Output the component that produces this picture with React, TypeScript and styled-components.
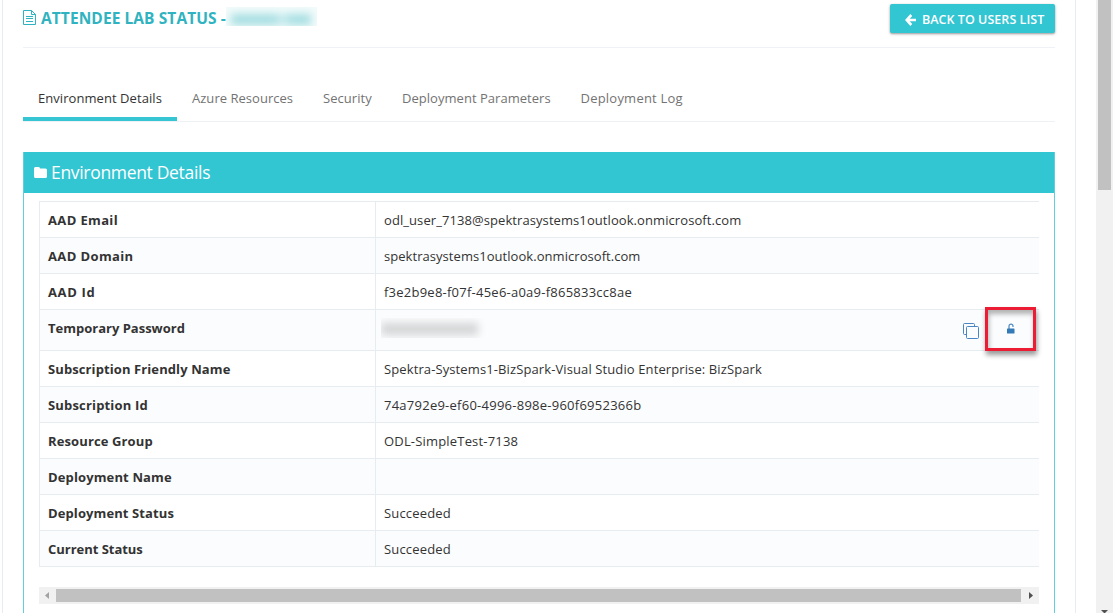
import React from "react";
import styled, { createGlobalStyle } from "styled-components";

const teal = "#32c5d2";

const GlobalStyle = createGlobalStyle`
  *, *::before, *::after { box-sizing: border-box; }
  body {
    margin: 0;
    height: 613px;
    overflow: hidden;
    background: #fff;
    color: #333;
    font-family: "Open Sans", "Noto Sans", sans-serif;
    font-size: 13px;
  }
`;

const Page = styled.div`
  display: flex;
  justify-content: space-between;
  width: 1113px;
  height: 613px;
  overflow: hidden;
`;

const Portlet = styled.main`
  margin-left: 2px;
  width: 1074px;
  height: 613px;
  padding: 0 20px;
  border: solid #e7ecf1;
  border-width: 0 1px;
`;

const TitleBar = styled.header`
  display: flex;
  justify-content: space-between;
  align-items: flex-start;
  height: 48px;
  padding-top: 4px;
  border-bottom: 1px solid #eef1f5;
`;

const Title = styled.h1`
  display: flex;
  align-items: center;
  margin: 0;
  height: 27px;
  color: #2fb3c0;
  font-size: 15.5px;
  font-weight: 700;
  white-space: pre;
  svg { margin-right: 5px; }
`;

const Track = styled.span<{ $ls?: number }>`
  letter-spacing: ${(p) => p.$ls ?? 0}px;
  white-space: pre;
`;

const RedactedName = styled.span`
  width: 91px;
  height: 19px;
  margin: -2px 0 0 -4px;
  overflow: hidden;
  padding: 7px 5px;
  background: #f3fbfb;
  &::before {
    content: "";
    display: block;
    width: 80px;
    height: 11px;
    background: linear-gradient(90deg, #a3dde1 0 55%, #cdeef0 64%, #a3dde1 74%);
    filter: blur(4px);
  }
`;

const BackButton = styled.button`
  display: flex;
  align-items: center;
  width: 165px;
  height: 29px;
  padding: 2px 0 0 15px;
  gap: 6px;
  border: 0;
  border-radius: 2px;
  background: ${teal};
  color: #fff;
  font: 600 12.5px "Open Sans", sans-serif;
  box-shadow: 0 1px 3px rgba(0, 0, 0, 0.25), 0 1px 2px rgba(0, 0, 0, 0.2);
`;

const Tabs = styled.nav`
  display: flex;
  height: 47px;
  margin-top: 27px;
  border-bottom: 1px solid #eef1f5;
`;

const Tab = styled.a<{ $w: number; $active?: boolean }>`
  width: ${(p) => p.$w}px;
  height: 46px;
  padding: 13px 0 0 15px;
  line-height: 20px;
  color: ${(p) => (p.$active ? "#333" : "#737373")};
  border-bottom: ${(p) => (p.$active ? `4px solid #36c6d3` : "0")};
`;

const Panel = styled.section`
  margin-top: 30px;
  height: 500px;
  border: 1px solid #5fcfdc;
  border-top: 0;
`;

const PanelHeader = styled.h2`
  display: flex;
  align-items: center;
  gap: 4px;
  margin: 0;
  height: 41px;
  padding-left: 10px;
  background: ${teal};
  color: #fff;
  font-size: 17.5px;
  font-weight: 400;
  span { margin-top: -2px; }
`;

const Details = styled.dl`
  margin: 8px 15px 0;
  border: solid #e7ecf1;
  border-width: 1px 0 0 1px;
`;

const Row = styled.div<{ $alt: boolean; $tall?: boolean }>`
  display: flex;
  height: ${(p) => (p.$tall ? 41 : 36)}px;
  border-bottom: 1px solid #e7ecf1;
  background: ${(p) => (p.$alt ? "#fbfcfd" : "#fff")};
  line-height: 20px;
`;

const Label = styled.dt`
  width: 336px;
  padding: 8px;
  border-right: 1px solid #e7ecf1;
  font-weight: 700;
`;

const Value = styled.dd`
  flex: 1;
  display: flex;
  justify-content: space-between;
  margin: 0;
  padding: 8px;
`;

const RedactedPassword = styled.span`
  width: 105px;
  height: 20px;
  margin: 0 0 0 -3px;
  padding: 5px 0;
  overflow: hidden;
  &::before {
    content: "";
    display: block;
    width: 97px;
    height: 12px;
    background: #d2d4d5;
    filter: blur(4px);
  }
`;

const Actions = styled.span`
  display: flex;
  align-items: flex-start;
  margin: -11px -5px 0 0;
  svg { display: block; }
`;

const CopyButton = styled.span`
  margin: 16px 6px 0 0;
`;

const UnlockFrame = styled.span`
  display: flex;
  align-items: center;
  justify-content: center;
  flex: none;
  width: 51px;
  height: 44px;
  padding-bottom: 1px;
  border: 3px solid #ed1c35;
  box-shadow: 1px 4px 5px rgba(0, 0, 0, 0.4), inset 1px 4px 5px rgba(0, 0, 0, 0.3);
`;

const HBar = styled.div`
  display: flex;
  align-items: center;
  justify-content: space-between;
  margin: 20px 15px 0;
  height: 17px;
  padding: 0 6px;
  background: #f1f1f1;
`;

const HThumb = styled.div`
  width: 965px;
  height: 13px;
  margin-right: 1px;
  background: #c1c1c1;
`;

const VBar = styled.aside`
  display: flex;
  flex-direction: column;
  align-items: center;
  justify-content: space-between;
  width: 17px;
  height: 613px;
  background: #f1f1f1;
`;

const VThumb = styled.div`
  width: 13px;
  height: 190px;
  background: #c1c1c1;
`;

const FileIcon = () => (
  <svg width="13" height="15" viewBox="0 0 13 15" fill="none" stroke="#2fb3c0">
    <path d="M.5.5h8l4 4v10H.5zM8.5.5v4h4M3 6.5h7M3 8.5h7M3 11.5h7" />
  </svg>
);

const ArrowIcon = () => (
  <svg width="11" height="12" viewBox="0 0 11 12" fill="none" stroke="#fff" strokeWidth="2.6">
    <path d="M6.3 1L1.7 6l4.6 5M2 6h9" />
  </svg>
);

const FolderIcon = () => (
  <svg width="13" height="11" viewBox="0 0 13 11" fill="#fff">
    <path d="M1.3 0h3.4Q6 0 6 1.5h5.5Q13 1.500 13 3v6.500Q13 11 11.500 11h-10Q0 11 0 9.500v-8Q0 0 1.300 0z" />
  </svg>
);

const CopyIcon = () => (
  <svg width="16" height="16" viewBox="0 0 16 16" fill="none" stroke="#4a86c2">
    <path d="M3.500 11.500H1.500Q.500 11.500.500 10.500V1.500Q.500.500 1.500.500h9Q11.500.500 11.500 1.500v2" />
    <rect x="3.500" y="3.500" width="12" height="12" rx="1" />
  </svg>
);

const UnlockIcon = () => (
  <svg width="8" height="11" viewBox="0 0 8 11">
    <path d="M2 6V3.200a2 2 0 0 1 4 0V4" fill="none" stroke="#4a86c2" strokeWidth="1.200" />
    <rect y="5.500" width="7.500" height="5" rx=".6" fill="#337ab7" />
  </svg>
);

const Caret = ({ d, color, w, h }: { d: string; color: string; w: number; h: number }) => (
  <svg width={w} height={h} fill={color}>
    <path d={d} />
  </svg>
);

const tabs = [
  { text: "Environment Details", w: 154, ls: 0.06 },
  { text: "Azure Resources", w: 131, ls: 0.03 },
  { text: "Security", w: 79, ls: 0.06 },
  { text: "Deployment Parameters", w: 178.5, ls: 0.03 },
  { text: "Deployment Log", w: 133, ls: 0.22 },
];

type Item = { label: string; value?: string; l?: number; v?: number; secret?: boolean };

const items: Item[] = [
  { label: "AAD Email", l: 0.36, value: "odl_user_7138@spektrasystems1outlook.onmicrosoft.com", v: 0.08 },
  { label: "AAD Domain", l: 0.38, value: "spektrasystems1outlook.onmicrosoft.com", v: 0.05 },
  { label: "AAD Id", l: 0.65, value: "f3e2b9e8-f07f-45e6-a0a9-f865833cc8ae", v: 0.24 },
  { label: "Temporary Password", secret: true },
  {
    label: "Subscription Friendly Name",
    l: 0.1,
    value: "Spektra-Systems1-BizSpark-Visual Studio Enterprise: BizSpark",
    v: 0.11,
  },
  { label: "Subscription Id", l: 0.17, value: "74a792e9-ef60-4996-898e-960f6952366b", v: 0.25 },
  { label: "Resource Group", l: 0.12, value: "ODL-SimpleTest-7138", v: 0.18 },
  { label: "Deployment Name", l: 0.13 },
  { label: "Deployment Status", l: 0.1, value: "Succeeded", v: 0.17 },
  { label: "Current Status", l: -0.03, value: "Succeeded", v: 0.17 },
];

export default function App() {
  return (
    <Page>
      <GlobalStyle />
      <Portlet>
        <TitleBar>
          <Title>
            <FileIcon />
            <Track $ls={0.08}>ATTENDEE LAB STATUS - </Track>
            <RedactedName />
          </Title>
          <BackButton>
            <ArrowIcon />
            <Track $ls={0.04}>BACK TO USERS LIST</Track>
          </BackButton>
        </TitleBar>
        <Tabs>
          {tabs.map((t, i) => (
            <Tab key={t.text} $w={t.w} $active={i === 0}>
              <Track $ls={t.ls}>{t.text}</Track>
            </Tab>
          ))}
        </Tabs>
        <Panel>
          <PanelHeader>
            <FolderIcon />
            <Track $ls={-0.32}>Environment Details</Track>
          </PanelHeader>
          <Details>
            {items.map((it, i) => (
              <Row key={it.label} $alt={i % 2 === 1} $tall={it.secret}>
                <Label>
                  <Track $ls={it.l}>{it.label}</Track>
                </Label>
                <Value>
                  {it.value && <Track $ls={it.v}>{it.value}</Track>}
                  {it.secret && (
                    <>
                      <RedactedPassword />
                      <Actions>
                        <CopyButton>
                          <CopyIcon />
                        </CopyButton>
                        <UnlockFrame>
                          <UnlockIcon />
                        </UnlockFrame>
                      </Actions>
                    </>
                  )}
                </Value>
              </Row>
            ))}
          </Details>
          <HBar>
            <Caret w={4} h={7} color="#a3a3a3" d="M4 0v7L0 3.500z" />
            <HThumb />
            <Caret w={4} h={7} color="#505050" d="M0 0v7l4-3.500z" />
          </HBar>
        </Panel>
      </Portlet>
      <VBar>
        <VThumb />
        <Caret w={7} h={3} color="#505050" d="M0 0h7L3.500 3.500z" />
      </VBar>
    </Page>
  );
}
